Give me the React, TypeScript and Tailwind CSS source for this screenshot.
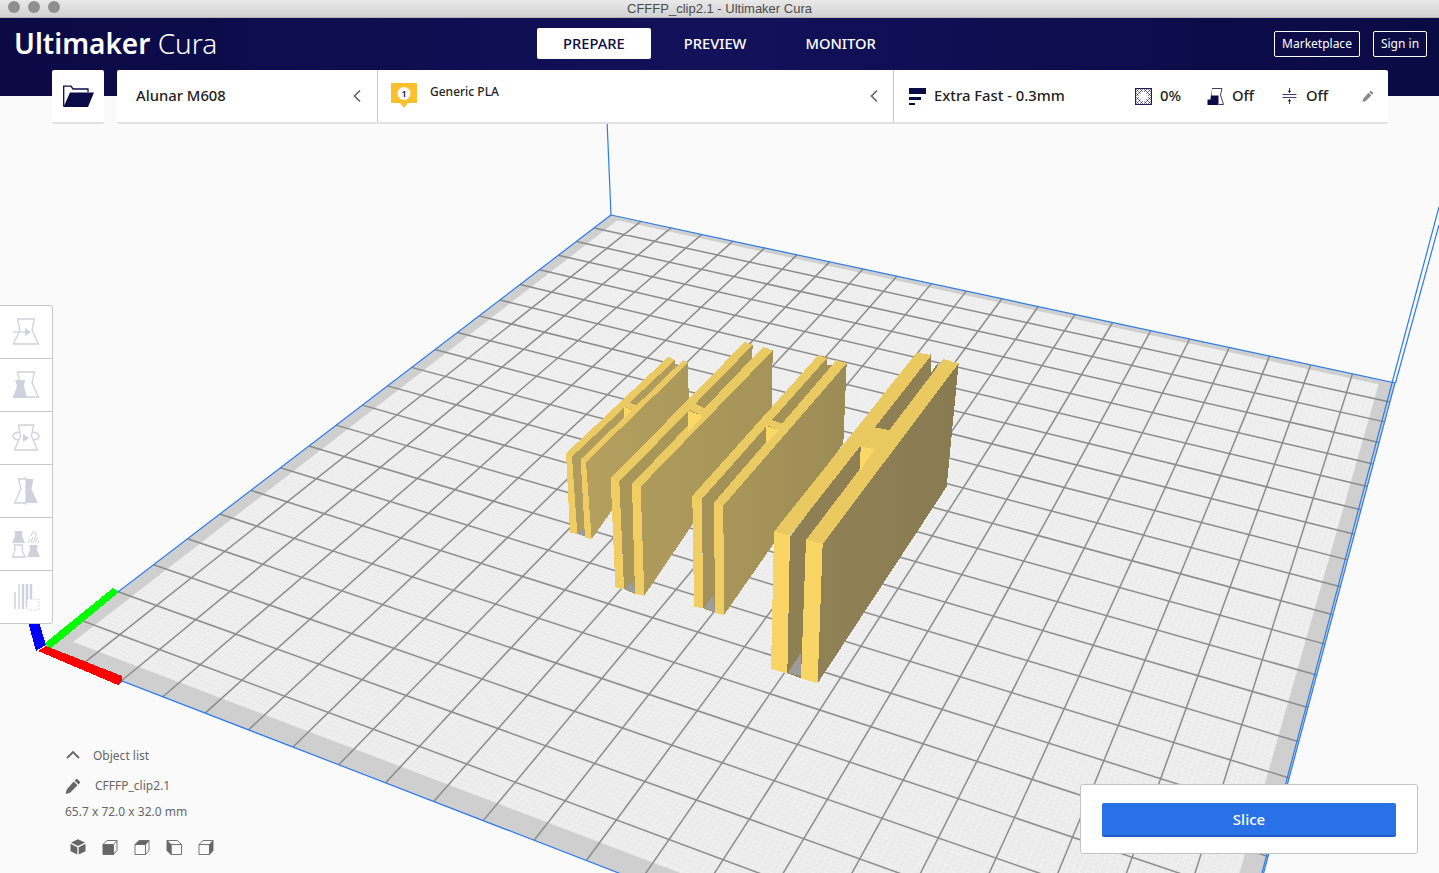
import type { ReactNode } from "react";

type Pt = [number, number];

// plate corners as seen on screen: back-left, back-right, front-right, front-left
const corners: Pt[] = [
  [611, 215],
  [1395, 383],
  [1203, 1099],
  [42, 650],
];

function makeHomography([p0, p1, p2, p3]: Pt[]) {
  const dx1 = p1[0] - p2[0];
  const dx2 = p3[0] - p2[0];
  const sx = p0[0] - p1[0] + p2[0] - p3[0];
  const dy1 = p1[1] - p2[1];
  const dy2 = p3[1] - p2[1];
  const sy = p0[1] - p1[1] + p2[1] - p3[1];
  const den = dx1 * dy2 - dx2 * dy1;
  const g = (sx * dy2 - dx2 * sy) / den;
  const h = (dx1 * sy - sx * dy1) / den;
  const a = p1[0] - p0[0] + g * p1[0];
  const b = p3[0] - p0[0] + h * p3[0];
  const d = p1[1] - p0[1] + g * p1[1];
  const e = p3[1] - p0[1] + h * p3[1];
  return (u: number, v: number): string => {
    const w = g * u + h * v + 1;
    return `${((a * u + b * v + p0[0]) / w).toFixed(2)} ${((d * u + e * v + p0[1]) / w).toFixed(2)}`;
  };
}

const project = makeHomography(corners);

// the grey margin round the printable area
const inner = { left: 0.016, right: 0.984, back: 0.011, front: 0.98 };

function gridPath(count: number, u0: number, u1: number, v0: number, v1: number): string {
  let d = "";
  for (let i = 1; i < count; i++) {
    const t = i / count;
    if (t > u0 && t < u1) d += `M${project(t, v0)}L${project(t, v1)}`;
    if (t > v0 && t < v1) d += `M${project(u0, t)}L${project(u1, t)}`;
  }
  return d;
}

const majorGrid = gridPath(22, 0, 1, 0, 1);
const minorGrid = gridPath(220, inner.left, inner.right, inner.back, inner.front);
const platePath = `M${project(0, 0)}L${project(1, 0)}L${project(1, 1)}L${project(0, 1)}Z`;
const innerPath = `M${project(inner.left, inner.back)}L${project(inner.right, inner.back)}L${project(inner.right, inner.front)}L${project(inner.left, inner.front)}Z`;

// model outlines are noted at 3x, from an origin of (550, 340)
const at = (...n: number[]): string => {
  const out: string[] = [];
  for (let i = 0; i < n.length; i += 2) out.push(`${550 + n[i] / 3},${340 + n[i + 1] / 3}`);
  return out.join(" ");
};

interface ClipModel {
  id: string;
  sideFrom: string;
  sideTo: string;
  gap: string;
  top: string;
  front: string;
  side: string;
  channel: string;
  floor?: string;
  rims: string[];
  fronts: string[];
  bridgeTop: string;
  bridgeFront: string;
}

const models: ClipModel[] = [
  {
    id: "a",
    sideFrom: "#b5a05f",
    sideTo: "#ab985b",
    gap: "#b09c5d",
    top: "#ebca63",
    front: "#efcd63",
    side: at(110, 355, 413, 68, 417, 185, 125, 597),
    channel: at(66, 345, 358, 60, 375, 60, 375, 80, 400, 75, 105, 590, 80, 580),
    floor: at(82, 582, 95, 565, 105, 590),
    rims: [at(48, 340, 355, 50, 375, 60, 66, 350), at(92, 358, 400, 60, 415, 68, 108, 366)],
    fronts: [at(48, 340, 66, 350, 82, 582, 60, 578), at(92, 358, 108, 366, 125, 597, 105, 593)],
    bridgeTop: at(222, 198, 236, 186, 265, 198, 250, 210),
    bridgeFront: at(222, 200, 248, 210, 222, 236),
  },
  {
    id: "b",
    sideFrom: "#ae9b5c",
    sideTo: "#a59358",
    gap: "#a99759",
    top: "#eaca62",
    front: "#f0ce63",
    side: at(272, 435, 668, 30, 666, 200, 283, 767),
    channel: at(208, 420, 585, 25, 608, 15, 606, 65, 645, 40, 255, 762, 222, 747),
    floor: at(222, 747, 252, 722, 255, 758),
    rims: [at(182, 415, 585, 5, 608, 15, 208, 425), at(246, 432, 640, 20, 668, 32, 272, 440)],
    fronts: [at(182, 415, 208, 425, 222, 747, 196, 742), at(246, 432, 272, 440, 283, 767, 255, 762)],
    bridgeTop: at(415, 208, 432, 190, 472, 208, 455, 226),
    bridgeFront: at(415, 212, 458, 228, 415, 278),
  },
  {
    id: "c",
    sideFrom: "#a89659",
    sideTo: "#9c8b55",
    gap: "#a39157",
    top: "#eaca62",
    front: "#f0ce63",
    side: at(520, 495, 890, 70, 880, 310, 522, 825),
    channel: at(455, 470, 805, 70, 830, 45, 830, 75, 860, 75, 495, 818, 460, 805),
    floor: at(462, 803, 490, 765, 495, 816),
    rims: [at(427, 468, 805, 45, 830, 55, 455, 478), at(492, 488, 860, 60, 890, 70, 520, 497)],
    fronts: [at(427, 468, 455, 478, 460, 805, 432, 800), at(492, 488, 520, 497, 522, 825, 495, 818)],
    bridgeTop: at(648, 255, 665, 240, 712, 256, 692, 272),
    bridgeFront: at(648, 258, 688, 270, 648, 312),
  },
  {
    id: "d",
    sideFrom: "#918157",
    sideTo: "#887a51",
    gap: "#8e7f55",
    top: "#ebc961",
    front: "#f8d564",
    side: at(818, 610, 1226, 70, 1190, 440, 803, 1030),
    channel: at(720, 590, 1100, 80, 1143, 42, 1142, 100, 1170, 60, 755, 1015, 712, 1000),
    floor: at(714, 998, 752, 940, 755, 1010),
    rims: [at(672, 575, 1100, 38, 1145, 45, 720, 587), at(768, 600, 1180, 57, 1226, 70, 818, 612)],
    fronts: [at(672, 575, 720, 587, 712, 1000, 663, 987), at(768, 600, 818, 612, 803, 1030, 753, 1015)],
    bridgeTop: at(980, 263, 1028, 272, 975, 335, 932, 320, 890, 312, 930, 262),
    bridgeFront: at(932, 320, 975, 328, 930, 392),
  },
];

function Viewport() {
  return (
    <svg className="absolute inset-0" width={1439} height={873} viewBox="0 0 1439 873">
      <defs>
        {models.map((m) => (
          <linearGradient key={m.id} id={`side-${m.id}`} x1="0" y1="0" x2="1" y2="0">
            <stop offset="0" stopColor={m.sideFrom} />
            <stop offset="1" stopColor={m.sideTo} />
          </linearGradient>
        ))}
      </defs>
      <path d={platePath} fill="#cfcfcf" />
      <path d={innerPath} fill="#ebebeb" />
      <path d={minorGrid} fill="none" stroke="#f6f6f6" strokeWidth={0.55} />
      <path d={majorGrid} fill="none" stroke="#8c8c8c" strokeWidth={1.5} />
      <g fill="none" stroke="#2f7bea" strokeWidth={1.2}>
        <path d={platePath} />
        <path d="M611 215L607 120" />
        <path d="M1392 383L1439 207" />
        <path d="M1395.5 383L1439 225" />
        <path d="M1392 383L1262 873" />
      </g>
      <g shapeRendering="crispEdges">
        {models.map((m) => (
          <g key={m.id}>
            <polygon points={m.channel} fill={m.gap} />
            {m.floor && <polygon points={m.floor} fill="#9c9c9c" />}
            <polygon points={m.side} fill={`url(#side-${m.id})`} />
            {m.rims.map((r) => (
              <polygon key={r} points={r} fill={m.top} />
            ))}
            {m.fronts.map((f) => (
              <polygon key={f} points={f} fill={m.front} />
            ))}
            <polygon points={m.bridgeTop} fill={m.top} />
            <polygon points={m.bridgeFront} fill="#fbd866" />
          </g>
        ))}
        <polygon points="28,622 39,622 46,645 36,651" fill="#0000ff" />
        <polygon points="45,643 113,588 119,592 50,649" fill="#00ff00" />
        <polygon points="38,651 46,646 122,676 122,681 118,685" fill="#ff0000" />
      </g>
    </svg>
  );
}

const navy = "#0b0b46";

function ChevronLeft() {
  return (
    <svg width="10" height="14" viewBox="0 0 10 14" fill="none" stroke="#666" strokeWidth="1.7">
      <path d="M8 1.5L2.5 7L8 12.5" />
    </svg>
  );
}

function FolderIcon() {
  return (
    <svg width="31" height="23" viewBox="0 0 31 23">
      <path d="M.7 21.5V1.2H8l2 2.8h15v3" fill="none" stroke={navy} strokeWidth="1.3" />
      <path d="M7 7.5h24L25 22H0.5z" fill={navy} />
    </svg>
  );
}

function MaterialBadge() {
  return (
    <div className="relative w-[26px] h-[25px]">
      <svg className="absolute inset-0" width="26" height="25" viewBox="0 0 26 25">
        <path d="M1 0h24a1 1 0 0 1 1 1v18a1 1 0 0 1-1 1h-8l-4 5-4-5H1a1 1 0 0 1-1-1V1a1 1 0 0 1 1-1z" fill="#fdc02d" />
        <circle cx="13" cy="10.5" r="6.5" fill="#fff" />
      </svg>
      <span className="absolute left-0 top-[4px] w-[26px] text-center text-[9px] leading-[13px] font-semibold text-[#111]">1</span>
    </div>
  );
}

function QualityIcon() {
  return (
    <div className="flex flex-col gap-[3px] w-[17px]">
      <div className="h-[6px] w-[17px] bg-[#0b0b46]" />
      <div className="h-[3px] w-[12px] bg-[#0b0b46]" />
      <div className="h-[2px] w-[6px] bg-[#0b0b46]" />
    </div>
  );
}

function InfillIcon() {
  return (
    <svg width="17" height="17" viewBox="0 0 17 17" fill="none" stroke={navy} strokeWidth="0.55">
      <path d="M.5 4.5L4.5.5M.5 8.5L8.5.5M.5 12.5L12.5.5M.5 16.5L16.5.5M4.5 16.5L16.5 4.5M8.5 16.5L16.5 8.5M12.5 16.5L16.5 12.5" />
      <path d="M.5.5L16.5 16.5M.5 4.5L12.5 16.5M.5 8.5L8.5 16.5M.5 12.5L4.5 16.5M4.5.5L16.5 12.5M8.5.5L16.5 8.5M12.5.5L16.5 4.5" />
      <path d="M8.5 3L14 8.5L8.5 14L3 8.5z" fill="#fff" stroke="none" />
      <rect x=".5" y=".5" width="16" height="16" strokeWidth="0.9" />
    </svg>
  );
}

function SupportIcon() {
  return (
    <svg width="17" height="17" viewBox="0 0 17 17">
      <path d="M5 .5h10L13.5 7l3 9.5H12" fill="none" stroke={navy} strokeWidth="0.8" />
      <path d="M4.5 1v6.5H11.5V17H.5V11.5h3z" fill={navy} />
    </svg>
  );
}

function AdhesionIcon() {
  return (
    <svg width="17" height="18" viewBox="0 0 17 18" fill="none" stroke={navy} strokeWidth="0.8">
      <path d="M1.5 7.5h14M1.5 10.5h14M8.5 1v4.5M8.5 12.5V17" />
      <path d="M6.8 3.8L8.5 6l1.7-2.2zM6.8 14.2l1.7-2.2 1.7 2.2z" fill={navy} stroke="none" />
    </svg>
  );
}

function PencilIcon({ size, color }: { size: number; color: string }) {
  return (
    <svg width={size} height={size} viewBox="0 0 16 16" fill={color}>
      <path d="M11 1.2a1 1 0 0 1 1.4 0l2.4 2.4a1 1 0 0 1 0 1.4L13.4 6.4 9.6 2.6z" />
      <path d="M8.7 3.5l3.8 3.8-7.4 7.4L.5 16l1.3-4.6z" />
    </svg>
  );
}

const toolStroke = "#d0d1dc";
const outlineFrustum = "M5.5 1H22.5L20 12L26.5 26H1.5L8 12Z";

function ToolIcon({ children }: { children: ReactNode }) {
  return (
    <svg width="28" height="28" viewBox="0 0 28 28" fill="none" stroke={toolStroke} strokeWidth="1.3">
      {children}
    </svg>
  );
}

const tools: ReactNode[] = [
  <ToolIcon key="move">
    <path d={outlineFrustum} />
    <path d="M1 14H14" />
    <path d="M13 10L19 14L13 18Z" fill={toolStroke} stroke="none" />
  </ToolIcon>,
  <ToolIcon key="scale">
    <path d={outlineFrustum} />
    <path d="M3 9H13L12 15L15 27H1L5 15Z" fill={toolStroke} stroke="none" />
  </ToolIcon>,
  <ToolIcon key="rotate">
    <path d="M6.5 1H21.5L19.5 12L25.5 26H2.5L8.5 12Z" />
    <path d="M8 8C-1 9 -1 15 6 16M20 8C29 9 29 15 22 16" />
    <path d="M11 10L17 14L11 18Z" fill={toolStroke} stroke="none" />
  </ToolIcon>,
  <ToolIcon key="mirror">
    <path d="M14 2H6.5L9 12L2.5 26H14" />
    <path d="M14 2H21.5L19.5 12L26 26H14Z" fill={toolStroke} stroke="none" />
    <path d="M14 0V28" />
  </ToolIcon>,
  <ToolIcon key="per-model">
    <path d="M2.5 1H10.5L10 6L13 13H0L3 6Z" fill={toolStroke} stroke="none" />
    <path d="M16 13L18 9M18.5 13L21 7M21 13L25 3M23.5 13L26 7M26 13L27 11M19 6L21 1M22 4L23.5 1" strokeWidth="1" />
    <path d="M2.5 15H10.5L10 20L13 27H0.5L3 20Z" />
    <path d="M17.5 15H25.5L25 20L28 27H15L18 20Z" fill={toolStroke} stroke="none" />
  </ToolIcon>,
  <ToolIcon key="blocker">
    <path d="M3 9V26M7 1V26" strokeWidth="1.5" />
    <path d="M11 1V26M15 1V24M19 1V16" strokeWidth="2.4" />
    <rect x="15" y="16" width="12" height="11" strokeWidth="1" strokeDasharray="1.5 1.5" fill="#fff" />
  </ToolIcon>,
];

const cubeEdge = "#666";

function Cube({ faces }: { faces: "all" | "front" | "top" | "left" | "right" }) {
  if (faces === "all") {
    return (
      <svg width="18" height="18" viewBox="0 0 18 18" fill={cubeEdge}>
        <path d="M9 1.2L16 4.5L9 8L2 4.5z" />
        <path d="M1.5 5.8L8.3 9.2V16.5L1.5 13.2zM16.5 5.8L9.7 9.2V16.5L16.5 13.2z" />
      </svg>
    );
  }
  if (faces === "left") {
    return (
      <svg width="18" height="18" viewBox="0 0 18 18" fill="none" stroke={cubeEdge} strokeWidth="0.9">
        <path d="M6 6.5H16.5V16.5H6zM2 2.5H12.5L16.5 6.5" />
        <path d="M2 2.5L6 6.5V16.5L2 12.5z" fill={cubeEdge} />
      </svg>
    );
  }
  return (
    <svg width="18" height="18" viewBox="0 0 18 18" fill="none" stroke={cubeEdge} strokeWidth="0.9">
      <path d="M2 6.5H12.5V16.5H2zM2 6.5L6 2.5H16V12.5L12.5 16.5M12.5 6.5L16 2.5" />
      {faces === "front" && <path d="M2 6.5H12.5V16.5H2z" fill={cubeEdge} stroke="none" />}
      {faces === "top" && <path d="M2 6.5L6 2.5H16L12.5 6.5z" fill={cubeEdge} stroke="none" />}
      {faces === "right" && <path d="M12.5 6.5L16 2.5V12.5L12.5 16.5z" fill={cubeEdge} stroke="none" />}
    </svg>
  );
}

export default function App() {
  return (
    <div className="relative w-[1439px] h-[873px] overflow-hidden bg-[#fafafa] font-['Noto_Sans',sans-serif]">
      <Viewport />
      <div className="relative flex flex-col h-full">
        {/* window title */}
        <div className="relative flex items-center justify-center h-[18px] bg-gradient-to-b from-[#e9e9e9] to-[#d2d2d2] border-b border-[#b4b4b4]">
          <div className="absolute left-[8px] top-[1px] flex gap-[8px]">
            <div className="w-[12px] h-[12px] rounded-full bg-[#8f8f8f]" />
            <div className="w-[12px] h-[12px] rounded-full bg-[#8f8f8f]" />
            <div className="w-[12px] h-[12px] rounded-full bg-[#8f8f8f]" />
          </div>
          <span className="font-['Liberation_Sans',sans-serif] text-[13px] leading-none text-[#4b4b4b]">
            CFFFP_clip2.1 - Ultimaker Cura
          </span>
        </div>

        {/* header + toolbar */}
        <div className="h-[78px] bg-gradient-to-r from-[#0b0a45] via-[#12115a] to-[#0a0a44]">
          <div className="flex items-start h-[52px]">
            <div className="w-[537px] pl-[14px] pt-[5px] text-[28px] leading-[40px] text-white whitespace-nowrap">
              <span className="font-semibold">Ultimaker</span> <span className="font-light">Cura</span>
            </div>
            <div className="flex gap-[7px] pt-[10px]">
              <div className="flex items-center h-[31px] px-[26px] rounded-[2px] bg-white text-[14.7px] font-medium text-[#0b0b46]">PREPARE</div>
              <div className="flex items-center h-[31px] px-[26px] text-[14.7px] font-medium text-white">PREVIEW</div>
              <div className="flex items-center h-[31px] px-[26px] text-[14.7px] font-medium text-white">MONITOR</div>
            </div>
            <div className="ml-auto flex gap-[13px] pt-[13px] pr-[12px]">
              <div className="flex items-center justify-center w-[86px] h-[26px] border border-white rounded-[2px] text-[12px] text-white">Marketplace</div>
              <div className="flex items-center justify-center w-[54px] h-[26px] border border-white rounded-[2px] text-[12px] text-white">Sign in</div>
            </div>
          </div>

          <div className="flex gap-[13px] pl-[52px] h-[54px]">
            <div className="flex items-center justify-center w-[52px] bg-white rounded-[2px] border-b-2 border-[#e2e2e2]">
              <FolderIcon />
            </div>
            <div className="flex w-[1271px] bg-white rounded-[2px] border-b-2 border-[#e2e2e2]">
              <div className="flex items-center justify-between w-[261px] pl-[19px] pr-[15px] border-r border-[#c8c8c8] text-[14.8px] font-medium text-[#222]">
                <span className="-mt-[1px]">Alunar M608</span>
                <ChevronLeft />
              </div>
              <div className="flex justify-between w-[516px] pl-[13px] pr-[14px] border-r border-[#c8c8c8]">
                <div className="flex gap-[13px] pt-[13px]">
                  <MaterialBadge />
                  <span className="text-[12px] leading-[16px] font-medium text-[#222] mt-[1px]">Generic PLA</span>
                </div>
                <div className="flex items-center">
                  <ChevronLeft />
                </div>
              </div>
              <div className="flex items-center flex-1 pl-[15px] text-[14.8px] font-medium text-[#222]">
                <QualityIcon />
                <span className="ml-[8px] w-[201px] -mt-[1px]">Extra Fast - 0.3mm</span>
                <InfillIcon />
                <span className="ml-[8px] w-[47px] -mt-[1px]">0%</span>
                <SupportIcon />
                <span className="ml-[8px] w-[49px] -mt-[1px]">Off</span>
                <AdhesionIcon />
                <span className="ml-[8px] w-[56px] -mt-[1px]">Off</span>
                <PencilIcon size={12} color="#8a8a8a" />
              </div>
            </div>
          </div>
        </div>

        {/* tools + bottom panels */}
        <div className="flex flex-col flex-1">
          <div className="mt-[209px] w-[53px] h-[319px] bg-white border border-l-0 border-[#c8c8c8] rounded-r-[3px] flex flex-col">
            {tools.map((tool, index) => (
              <div
                key={index}
                className={index < 5 ? "flex shrink-0 items-center justify-center h-[53px] border-b border-[#c8c8c8]" : "flex shrink-0 items-center justify-center h-[52px]"}
              >
                {tool}
              </div>
            ))}
          </div>

          <div className="mt-auto flex items-end justify-between pl-[65px] pr-[21px] pb-[17px]">
            <div className="text-[12px] text-[#666]">
              <div className="flex items-center h-[20px]">
                <svg width="14" height="9" viewBox="0 0 14 9" fill="none" stroke="#666" strokeWidth="1.8" className="ml-[1px] -mt-[3px]">
                  <path d="M1 8L7 2L13 8" />
                </svg>
                <span className="ml-[13px]">Object list</span>
              </div>
              <div className="flex items-center h-[20px] mt-[10px]">
                <PencilIcon size={16} color="#666" />
                <span className="ml-[14px]">CFFFP_clip2.1</span>
              </div>
              <div className="h-[18px] mt-[7px] leading-[18px]">65.7 x 72.0 x 32.0 mm</div>
              <div className="flex gap-[14px] mt-[17px] ml-[4px]">
                <Cube faces="all" />
                <Cube faces="front" />
                <Cube faces="top" />
                <Cube faces="left" />
                <Cube faces="right" />
              </div>
            </div>
            <div className="mb-[2px] w-[338px] h-[70px] bg-white border border-[#c4c4c4] rounded-[3px] px-[21px] pt-[18px]">
              <div className="flex items-center justify-center h-[34px] rounded-[2px] bg-[#2871e6] border-b-2 border-[#1e5fc7] text-[15px] font-medium text-white">
                Slice
              </div>
            </div>
          </div>
        </div>
      </div>
    </div>
  );
}
